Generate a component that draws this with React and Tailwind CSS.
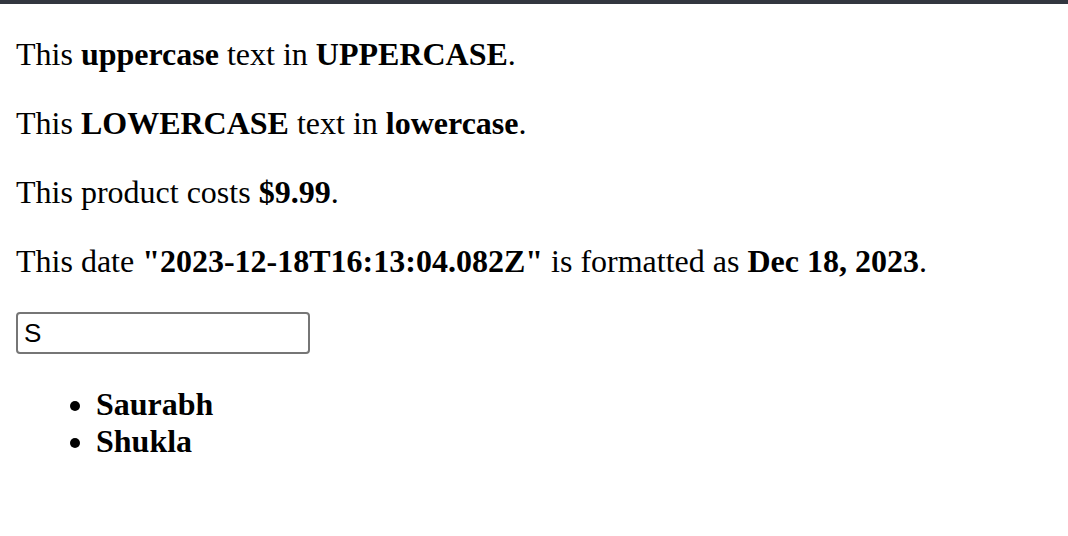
import { useState } from "react";

const names = ["Saurabh", "Shukla", "Rahul", "Amit"];

export default function App() {
  const [query, setQuery] = useState("S");
  const filtered = names.filter((n) => n.startsWith(query));

  return (
    <div className="min-h-[536px] border-t-4 border-[#32363f] bg-white px-4 text-[32px] leading-[37px] text-black font-['Liberation_Serif','Times_New_Roman',serif]">
      {/* Pipes */}
      <p className="my-8">
        This <b>uppercase</b> text in <b>UPPERCASE</b>.
      </p>
      <p className="my-8">
        This <b>LOWERCASE</b> text in <b>lowercase</b>.
      </p>
      <p className="my-8">
        This product costs <b>$9.99</b>.
      </p>
      <p className="my-8">
        This date <b>"2023-12-18T16:13:04.082Z"</b> is formatted as{" "}
        <b>Dec 18, 2023</b>.
      </p>

      {/* Search */}
      <div className="flex">
        <input
          value={query}
          onChange={(e) => setQuery(e.target.value)}
          className="h-[42px] w-[294px] rounded-[4px] border-2 border-[#767676] px-[6px] text-[26px] leading-none text-black outline-none font-['Liberation_Sans',Arial,sans-serif]"
        />
      </div>

      <ul className="my-8 list-disc pl-20 font-bold">
        {filtered.map((n) => (
          <li key={n}>{n}</li>
        ))}
      </ul>
    </div>
  );
}
